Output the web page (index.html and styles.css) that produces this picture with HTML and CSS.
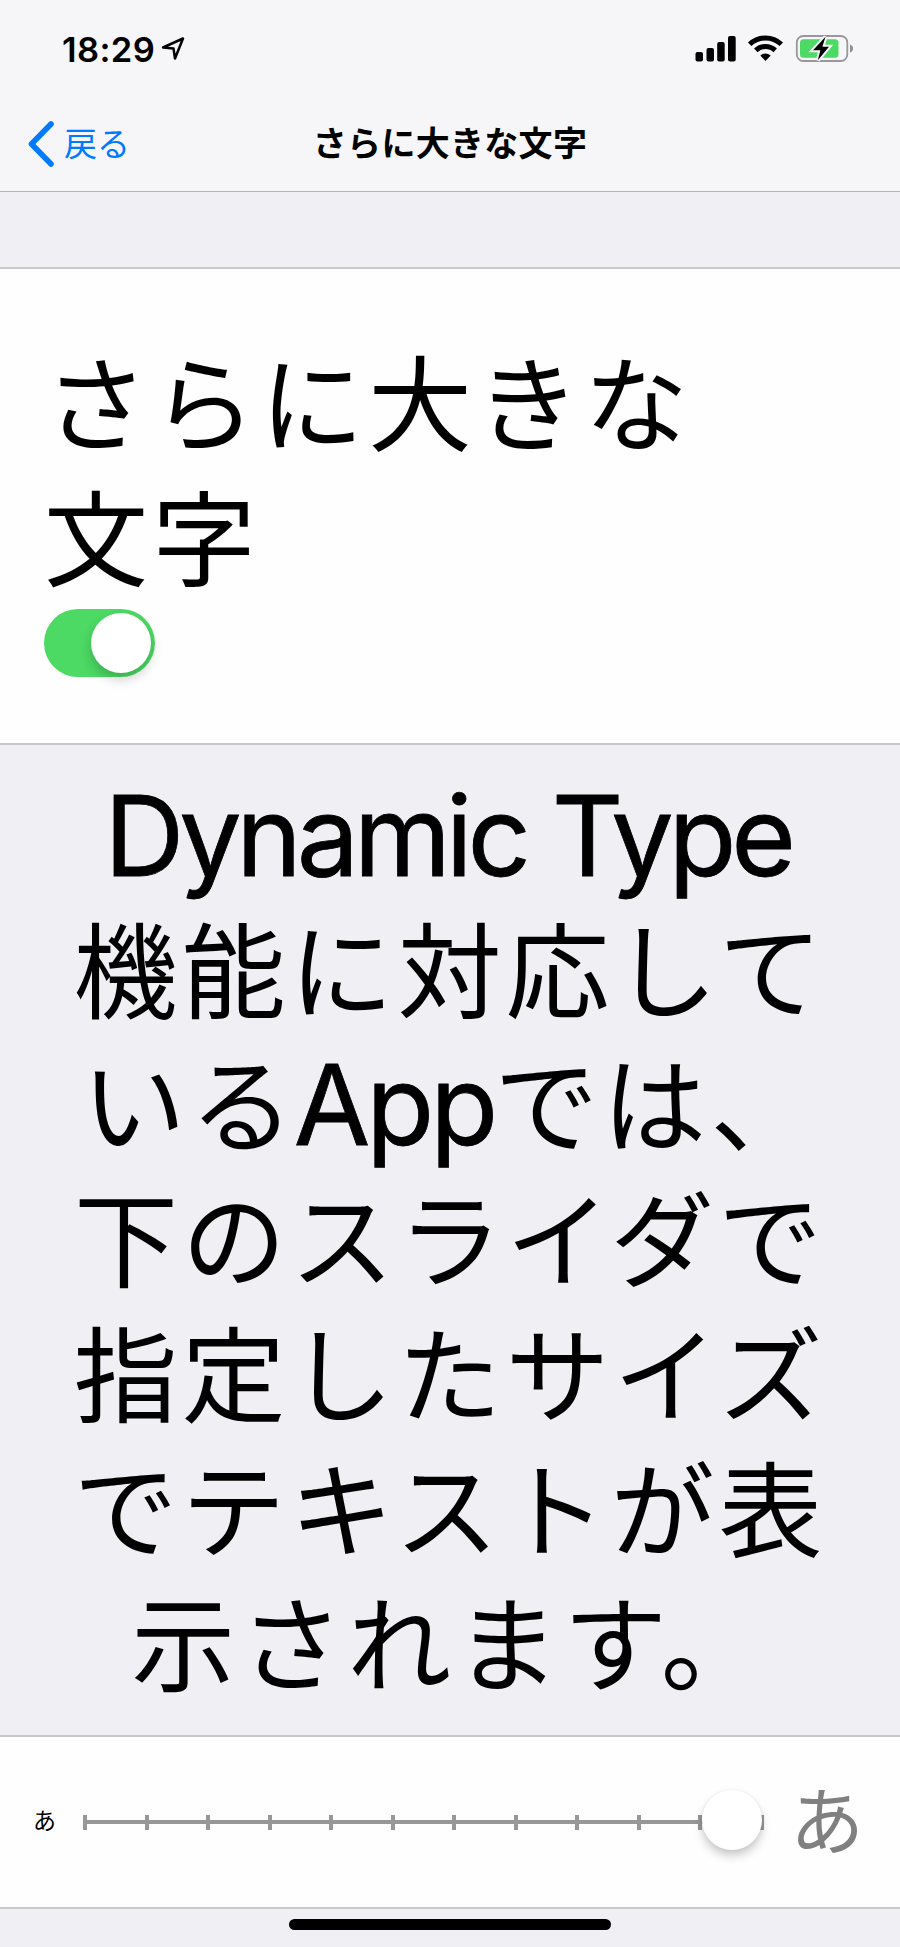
FILE: index.html
```html
<!DOCTYPE html>
<html lang="ja">
  <head>
    <meta charset="UTF-8" />
    <meta name="viewport" content="width=device-width, initial-scale=1" />
    <title>さらに大きな文字</title>
    <link rel="stylesheet" href="styles.css">
  </head>
  <body>
    <header>
      <div class="status-bar">
        <span class="time">18:29</span>
        <svg class="location" width="24" height="24" viewBox="0 0 24 24">
          <path d="M2 10.5 L22 1.5 L14 21.5 L12.5 11.5 Z" fill="none" stroke="#000" stroke-width="2.5" stroke-linejoin="round" />
        </svg>
        <svg class="status-icons" width="160" height="30" viewBox="0 0 160 30">
          <rect x="0.5" y="18" width="7.5" height="9.5" rx="2" />
          <rect x="11.5" y="14" width="7.5" height="13.5" rx="2" />
          <rect x="22.2" y="8" width="7.5" height="19.5" rx="2" />
          <rect x="33" y="2" width="7.7" height="25.5" rx="2" />
          <g fill="none" stroke="#000" stroke-width="5">
            <path d="M54.7 10.2 A23 23 0 0 1 86.3 10.2" />
            <path d="M60.8 16.4 A14 14 0 0 1 80.2 16.4" />
          </g>
          <path d="M65.3 21.4 A8.5 8.5 0 0 1 75.7 21.4 L70.5 27 Z" />
          <rect x="101.8" y="2" width="50.5" height="25" rx="6.5" fill="none" stroke="#98989c" stroke-width="1.8" />
          <path d="M155 10.5 Q158 11.5 158 14.5 Q158 17.5 155 18.5 Z" fill="#8e8e93" />
          <rect x="105" y="5.3" width="38.5" height="18.4" rx="3.5" fill="#4cd964" />
          <path class="bolt" d="M130.5 2.8 L118 16.2 H125.4 L122.8 26.3 L134 12.7 H127.4 Z" />
          <path d="M130.5 2.8 L118 16.2 H125.4 L122.8 26.3 L134 12.7 H127.4 Z" />
        </svg>
      </div>
      <nav>
        <a class="back">
          <svg width="28" height="46" viewBox="0 0 28 46">
            <path d="M24 3 L4.5 23 L24 43" fill="none" stroke="#007aff" stroke-width="5.6" stroke-linecap="round" stroke-linejoin="round" />
          </svg>
          <span>戻る</span>
        </a>
        <h1>さらに大きな文字</h1>
      </nav>
    </header>

    <section class="card toggle-card">
      <div class="large-text">さらに大きな<br />文字</div>
      <div class="switch"><div class="knob"></div></div>
    </section>

    <p class="large-text description">
      <span class="latin">Dynamic Type</span><br />
      機能に対応して<br />
      いる<span class="latin app">App</span>では、<br />
      下のスライダで<br />
      指定したサイズ<br />
      でテキストが表<br />
      示されます。
    </p>

    <section class="card slider-card">
      <span class="small-a">あ</span>
      <div class="slider">
        <i></i><i></i><i></i><i></i><i></i><i></i>
        <i></i><i></i><i></i><i></i><i></i><i></i>
        <div class="thumb"></div>
      </div>
      <span class="big-a">あ</span>
    </section>
    <div class="home-bar"></div>
  </body>
</html>
```
FILE: styles.css
```css
* {
  box-sizing: border-box;
}
body {
  margin: 0;
  height: 1947px;
  overflow: hidden;
  background-color: #efeff4;
  color: #000;
  font-family: "Noto Sans CJK JP", sans-serif;
}
header {
  height: 192px;
  background-color: #f6f6f8;
  border-bottom: 1px solid #b5b5b8;
}
.status-bar {
  display: flex;
  height: 96px;
  padding: 34px 45px 0 62px;
}
.time {
  width: 99px;
  font-family: Inter, sans-serif;
  font-size: 34.5px;
  font-weight: 600;
  line-height: 31px;
  letter-spacing: 0.4px;
}
.location {
  margin-top: 3px;
}
.status-icons {
  margin-left: auto;
}
.bolt {
  stroke: #f6f6f8;
  stroke-width: 4;
}
nav {
  display: grid;
  grid-template-columns: 250px 1fr 250px;
  align-items: center;
  height: 95px;
}
.back {
  display: flex;
  align-items: center;
  gap: 9px;
  padding-left: 27px;
  color: #007aff;
  font-size: 33px;
  line-height: 46px;
}
.back span {
  padding-bottom: 4px;
}
h1 {
  margin: 0;
  padding-bottom: 4px;
  font-size: 34px;
  font-weight: 700;
  line-height: 46px;
  letter-spacing: 0.3px;
  text-align: center;
  white-space: nowrap;
}
.card {
  background-color: #fefefe;
  border-top: 2px solid #c8c8ca;
  border-bottom: 2px solid #c8c8ca;
}
.large-text {
  font-size: 104px;
  line-height: 134.7px;
  letter-spacing: 4px;
}
.toggle-card {
  height: 478px;
  margin-top: 75px;
  padding: 63px 44px 0;
}
.switch {
  width: 111px;
  height: 68px;
  margin-top: 8px;
  padding: 4px;
  border-radius: 34px;
  background-color: #4cd964;
}
.knob {
  width: 60px;
  height: 60px;
  margin-left: auto;
  border-radius: 50%;
  background-color: #fff;
  box-shadow: 0 6px 12px rgba(0, 0, 0, 0.2);
}
.description {
  height: 990px;
  margin: 0;
  padding-top: 19px;
  text-align: center;
  white-space: nowrap;
}
.latin {
  margin-left: -5px;
  font-family: Inter, sans-serif;
  font-size: 111px;
  line-height: 100px;
  letter-spacing: -5.2px;
  -webkit-text-stroke: 0.8px #000;
}
.app {
  margin-left: -4px;
  letter-spacing: -4px;
}
.slider-card {
  display: flex;
  align-items: center;
  height: 174px;
  padding-left: 33px;
}
.small-a {
  width: 50px;
  padding-bottom: 6px;
  font-size: 23px;
  line-height: 30px;
}
.slider {
  position: relative;
  display: flex;
  justify-content: space-between;
  width: 681px;
  height: 15px;
  background: linear-gradient(#979797, #979797) center / 100% 4px no-repeat;
}
.slider i {
  width: 4px;
  background-color: #979797;
}
.thumb {
  position: absolute;
  top: -25px;
  right: 2px;
  width: 60px;
  height: 60px;
  border-radius: 50%;
  background-color: #fff;
  box-shadow: 0 6px 10px rgba(0, 0, 0, 0.2), 0 0 4px rgba(0, 0, 0, 0.06);
}
.big-a {
  margin-left: 26px;
  padding-bottom: 10px;
  color: #808080;
  font-size: 74px;
  line-height: 90px;
}
.home-bar {
  width: 322px;
  height: 11px;
  margin: 10px auto 0;
  border-radius: 6px;
  background-color: #000;
}
```
